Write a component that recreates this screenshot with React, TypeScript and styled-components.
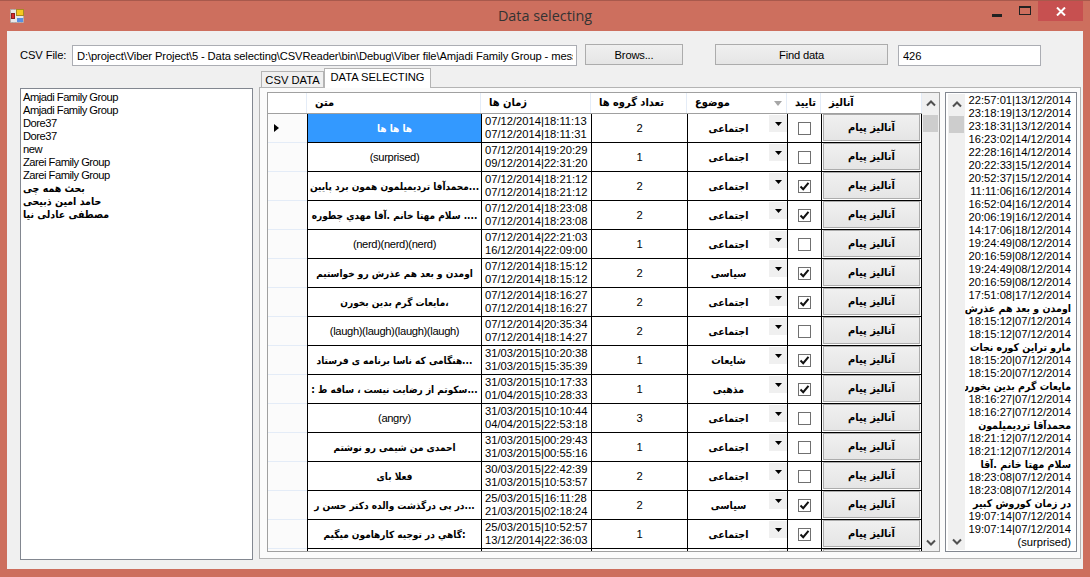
import React from 'react';
import styled, { createGlobalStyle } from 'styled-components';

const GlobalStyle = createGlobalStyle`
  html, body {
    margin: 0;
    padding: 0;
  }
  body {
    font-family: "Liberation Sans", "DejaVu Sans", sans-serif;
    font-size: 11.2px;
    color: #000;
    overflow: hidden;
  }
`;

const PERSIAN_FONT = '"DejaVu Sans Condensed", "DejaVu Sans", sans-serif';

interface IRow {
  text: string;
  rtl?: boolean;
  times: [string, string];
  count: number;
  subject: string;
  checked: boolean;
}

const SOCIAL = 'اجتماعی';
const POLITICAL = 'سیاسی';

const rows: IRow[] = [
  { text: 'ها ها ها', rtl: true, times: ['07/12/2014|18:11:13', '07/12/2014|18:11:31'], count: 2, subject: SOCIAL, checked: false },
  { text: '(surprised)', times: ['07/12/2014|19:20:29', '09/12/2014|22:31:20'], count: 1, subject: SOCIAL, checked: false },
  { text: '...محمدآقا ترديميلمون همون برد پايين', rtl: true, times: ['07/12/2014|18:21:12', '07/12/2014|18:21:12'], count: 2, subject: SOCIAL, checked: true },
  { text: '.... سلام مهتا خانم .آقا مهدي چطوره', rtl: true, times: ['07/12/2014|18:23:08', '07/12/2014|18:23:08'], count: 2, subject: SOCIAL, checked: true },
  { text: '(nerd)(nerd)(nerd)', times: ['07/12/2014|22:21:03', '16/12/2014|22:09:00'], count: 1, subject: SOCIAL, checked: false },
  { text: 'اومدن و بعد هم عذرش رو خواستیم', rtl: true, times: ['07/12/2014|18:15:12', '07/12/2014|18:15:12'], count: 2, subject: POLITICAL, checked: true },
  { text: '،مایعات گرم بدین بخورن', rtl: true, times: ['07/12/2014|18:16:27', '07/12/2014|18:16:27'], count: 2, subject: SOCIAL, checked: true },
  { text: '(laugh)(laugh)(laugh)(laugh)', times: ['07/12/2014|20:35:34', '07/12/2014|18:14:27'], count: 2, subject: SOCIAL, checked: false },
  { text: '...هنگامی که ناسا برنامه ی فرستاد', rtl: true, times: ['31/03/2015|10:20:38', '31/03/2015|15:35:39'], count: 1, subject: 'شایعات', checked: true },
  { text: '...سکوتم از رضایت نیست ، ساقه ط :', rtl: true, times: ['31/03/2015|10:17:33', '01/04/2015|10:28:33'], count: 1, subject: 'مذهبی', checked: true },
  { text: '(angry)', times: ['31/03/2015|10:10:44', '04/04/2015|22:53:18'], count: 3, subject: SOCIAL, checked: false },
  { text: 'احمدی من شیمی رو نوشتم', rtl: true, times: ['31/03/2015|00:29:43', '31/03/2015|00:55:16'], count: 1, subject: SOCIAL, checked: false },
  { text: 'فعلا بای', rtl: true, times: ['30/03/2015|22:42:39', '31/03/2015|10:53:57'], count: 2, subject: SOCIAL, checked: false },
  { text: '...در پی درگذشت والده دکتر حسن ر', rtl: true, times: ['25/03/2015|16:11:28', '21/03/2015|02:18:24'], count: 2, subject: POLITICAL, checked: true },
  { text: ':گاهي در توجيه کارهامون ميگيم', rtl: true, times: ['25/03/2015|10:52:57', '13/12/2014|22:36:03'], count: 1, subject: SOCIAL, checked: true },
];

const names = [
  'Amjadi Family Group',
  'Amjadi Family Group',
  'Dore37',
  'Dore37',
  'new',
  'Zarei Family Group',
  'Zarei Family Group',
];

const persianNames = ['بحث همه چی', 'حامد امین ذبیحی', 'مصطفی عادلی نیا'];

const timeList = [
  '22:57:01|13/12/2014', '23:18:19|13/12/2014', '23:18:31|13/12/2014', '16:23:02|14/12/2014',
  '22:28:16|14/12/2014', '20:22:33|15/12/2014', '20:52:37|15/12/2014', '11:11:06|16/12/2014',
  '16:52:04|16/12/2014', '20:06:19|16/12/2014', '14:17:06|18/12/2014', '19:24:49|08/12/2014',
  '20:16:59|08/12/2014', '19:24:49|08/12/2014', '20:16:59|08/12/2014', '17:51:08|17/12/2014',
  'اومدن و بعد هم عذرش',
  '18:15:12|07/12/2014', '18:15:12|07/12/2014',
  'مارو تراین کوره نجات',
  '18:15:20|07/12/2014', '18:15:20|07/12/2014',
  'مایعات گرم بدین بخورن',
  '18:16:27|07/12/2014', '18:16:27|07/12/2014',
  'محمدآقا ترديميلمون',
  '18:21:12|07/12/2014', '18:21:12|07/12/2014',
  'سلام مهتا خانم .آقا',
  '18:23:08|07/12/2014', '18:23:08|07/12/2014',
  'در زمان کوروش کبیر',
  '19:07:14|07/12/2014', '19:07:14|07/12/2014',
  '(surprised)',
];

const isPersian = (s: string) => /[\u0600-\u06ff]/.test(s);

const ChevronUp = () => (
  <svg width="10" height="7" viewBox="0 0 10 7">
    <path d="M1 5.5 L5 1.5 L9 5.5" fill="none" stroke="#505050" strokeWidth="2" />
  </svg>
);

const ChevronDown = () => (
  <svg width="10" height="7" viewBox="0 0 10 7">
    <path d="M1 1.5 L5 5.5 L9 1.5" fill="none" stroke="#505050" strokeWidth="2" />
  </svg>
);

const FormIcon = () => (
  <svg width="14" height="14" viewBox="0 0 14 14">
    <rect x="0.5" y="0.5" width="13" height="13" fill="#e8e8e8" stroke="#a8a8a8" strokeDasharray="2 1" />
    <rect x="6.5" y="0.5" width="7" height="6" fill="#f6c81e" stroke="#a88a20" strokeWidth="1" />
    <rect x="1.5" y="4.5" width="3" height="5" fill="#d8282c" stroke="#8c2020" strokeWidth="1" />
    <rect x="7" y="9" width="6" height="4" fill="#5a8ee0" />
  </svg>
);

const DropArrow = () => (
  <svg width="7" height="4" viewBox="0 0 7 4">
    <path d="M0 0 H7 L3.5 4 Z" fill="#000" />
  </svg>
);

const CheckMark = () => (
  <svg width="11" height="11" viewBox="0 0 11 11">
    <path d="M1.5 5.5 L4.2 8.2 L9.5 1.8" fill="none" stroke="#111" strokeWidth="2" />
  </svg>
);

function Scroller() {
  return (
    <ScrollBar>
      <ScrollArrow><ChevronUp /></ScrollArrow>
      <ScrollThumb />
      <ScrollTrack />
      <ScrollArrow><ChevronDown /></ScrollArrow>
    </ScrollBar>
  );
}

export default function App() {
  return (
    <Window>
      <GlobalStyle />
      <TitleBar>
        <TitleIcon><FormIcon /></TitleIcon>
        <Title>Data selecting</Title>
        <WindowControls>
          <MinButton><MinGlyph /></MinButton>
          <MaxButton><MaxGlyph /></MaxButton>
          <CloseButton>
            <svg width="10" height="9" viewBox="0 0 10 9">
              <path d="M1 0.5 L9 8.5 M9 0.5 L1 8.5" stroke="#fff" strokeWidth="2" />
            </svg>
          </CloseButton>
        </WindowControls>
      </TitleBar>

      <Client>
        <TopRow>
          <FileLabel>CSV File:</FileLabel>
          <PathInput readOnly value="D:\project\Viber Project\5 - Data selecting\CSVReader\bin\Debug\Viber file\Amjadi Family Group - messages.csv" />
          <BrowsButton>Brows...</BrowsButton>
          <FindButton>Find data</FindButton>
          <CountInput readOnly value="426" />
        </TopRow>

        <Body>
          <NameList>
            {names.map((name, i) => <NameItem key={i}>{name}</NameItem>)}
            {persianNames.map((name, i) => <PersianName key={i} dir="rtl">{name}</PersianName>)}
          </NameList>

          <TabArea>
            <TabBar>
              <Tab>CSV DATA</Tab>
              <Tab $active>DATA SELECTING</Tab>
            </TabBar>
            <TabPanel>
              <GridBox>
                <GridTable>
                  <HeaderRow>
                    <HeaderCell />
                    <HeaderCell>متن</HeaderCell>
                    <HeaderCell>زمان ها</HeaderCell>
                    <HeaderCell>تعداد گروه ها</HeaderCell>
                    <HeaderCell>
                      موضوع
                      <SortArrow />
                    </HeaderCell>
                    <HeaderCell>تایید</HeaderCell>
                    <HeaderCell>آنالیز</HeaderCell>
                  </HeaderRow>
                  {rows.map((row, i) => (
                    <DataRow key={i}>
                      <RowHead>{i === 0 && <RowMarker />}</RowHead>
                      <TextCell $fa={row.rtl} $selected={i === 0} dir={row.rtl ? 'rtl' : 'ltr'}>
                        {row.text}
                      </TextCell>
                      <TimeCell>
                        <span>{row.times[0]}</span>
                        <span>{row.times[1]}</span>
                      </TimeCell>
                      <CountCell>{row.count}</CountCell>
                      <SubjectCell>
                        <SubjectText dir="rtl">{row.subject}</SubjectText>
                        <ComboButton><DropArrow /></ComboButton>
                      </SubjectCell>
                      <CheckCell>
                        <CheckBox>{row.checked && <CheckMark />}</CheckBox>
                      </CheckCell>
                      <ActionCell>
                        <ActionButton>آنالیز پیام</ActionButton>
                      </ActionCell>
                    </DataRow>
                  ))}
                  {/* next row only just shows under the last one */}
                  <DataRow>
                    <RowHead />
                    <GridCell />
                    <GridCell />
                    <GridCell />
                    <SubjectCell>
                      <span />
                      <ComboButton />
                    </SubjectCell>
                    <GridCell />
                    <ActionCell>
                      <ActionButton />
                    </ActionCell>
                  </DataRow>
                </GridTable>
                <Scroller />
              </GridBox>

              <TimeList>
                <Scroller />
                <TimeLines>
                  {timeList.map((line, i) => (
                    <TimeLine key={i} $fa={isPersian(line)} dir={isPersian(line) ? 'rtl' : 'ltr'}>
                      {line}
                    </TimeLine>
                  ))}
                </TimeLines>
              </TimeList>
            </TabPanel>
          </TabArea>
        </Body>
      </Client>
    </Window>
  );
}

const Window = styled.div`
  width: 1090px;
  height: 577px;
  box-sizing: border-box;
  background: #cd6f5e;
  border-top: 1px solid #a8594c;
  padding: 0 7px 8px 7px;
  display: flex;
  flex-direction: column;
`;

const TitleBar = styled.div`
  height: 30px;
  flex: none;
  display: grid;
  grid-template-columns: 1fr auto 1fr;
  align-items: start;
`;

const TitleIcon = styled.div`
  padding: 8px 0 0 3px;
  line-height: 0;
`;

const Title = styled.div`
  font-family: "Open Sans", sans-serif;
  font-size: 14.4px;
  line-height: 30px;
  color: #333;
`;

const WindowControls = styled.div`
  display: flex;
  justify-content: flex-end;
`;

const MinButton = styled.div`
  width: 24px;
  height: 19px;
  margin-right: 2px;
  display: flex;
  align-items: flex-end;
  justify-content: center;
`;

const MinGlyph = styled.div`
  width: 10px;
  height: 3px;
  margin-bottom: 3px;
  background: #222;
`;

const MaxButton = styled.div`
  width: 27px;
  height: 19px;
  display: flex;
  align-items: center;
  justify-content: center;
`;

const MaxGlyph = styled.div`
  width: 10px;
  height: 6px;
  border: 1px solid #222;
  border-top-width: 2px;
`;

const CloseButton = styled.div`
  width: 45px;
  height: 20px;
  background: #c75050;
  display: flex;
  align-items: center;
  justify-content: center;
`;

const Client = styled.div`
  flex: 1;
  background: #f0f0f0;
  padding: 13px 0 0 13px;
  min-height: 0;
`;

const TopRow = styled.div`
  height: 22px;
  display: flex;
  align-items: stretch;
`;

const FileLabel = styled.label`
  width: 52px;
  line-height: 22px;
  letter-spacing: -0.1px;
`;

const PathInput = styled.input`
  width: 505px;
  height: 21px;
  margin-top: 1px;
  box-sizing: border-box;
  border: 1px solid #abadb3;
  background: #fff;
  padding: 0 3px 0 4px;
  font: inherit;
  letter-spacing: -0.12px;
  color: #000;
  outline: none;
`;

const BrowsButton = styled.button`
  width: 98px;
  height: 21px;
  margin-left: 8px;
  border: 1px solid #acacac;
  background: linear-gradient(#f0f0f0, #e5e5e5);
  padding: 0;
  font: inherit;
  letter-spacing: -0.2px;
  color: #000;
`;

const FindButton = styled(BrowsButton)`
  width: 173px;
  margin-left: 32px;
`;

const CountInput = styled(PathInput)`
  width: 143px;
  margin-left: 10px;
`;

const Body = styled.div`
  display: flex;
  margin-top: 2px;
`;

const NameList = styled.div`
  width: 233px;
  height: 472px;
  box-sizing: border-box;
  margin-top: 20px;
  border: 1px solid #828790;
  background: #fff;
  padding: 2px;
  flex: none;
`;

const NameItem = styled.div`
  height: 13px;
  line-height: 13px;
  letter-spacing: -0.5px;
`;

const PersianName = styled.div`
  height: 13px;
  line-height: 13px;
  width: fit-content;
  font-family: ${PERSIAN_FONT};
  font-weight: 700;
  font-size: 10.5px;
`;

const TabArea = styled.div`
  margin-left: 6px;
  width: 822px;
  flex: none;
`;

const TabBar = styled.div`
  height: 20px;
  margin-bottom: -1px;
  padding-left: 2px;
  display: flex;
  align-items: flex-end;
  position: relative;
  z-index: 1;
`;

const Tab = styled.div<{ $active?: boolean }>`
  box-sizing: border-box;
  width: ${(p) => (p.$active ? '107px' : '63px')};
  height: ${(p) => (p.$active ? '20px' : '17px')};
  line-height: ${(p) => (p.$active ? '17px' : '16px')};
  text-align: center;
  border: 1px solid #b4b4b4;
  border-bottom: ${(p) => (p.$active ? 'none' : '1px solid #b4b4b4')};
  background: ${(p) => (p.$active ? '#fff' : '#f0f0f0')};
`;

const TabPanel = styled.div`
  box-sizing: border-box;
  height: 472px;
  border: 1px solid #b4b4b4;
  background: #fbfbfb;
  padding: 4px 1px 0 7px;
  display: flex;
  align-items: flex-start;
  gap: 5px;
`;

const GridBox = styled.div`
  width: 673px;
  height: 460px;
  box-sizing: border-box;
  border: 1px solid #a0a0a0;
  background: #f0f0f0;
  display: flex;
  flex: none;
`;

const GridTable = styled.div`
  width: 654px;
  flex: none;
  overflow: hidden;
`;

const HeaderRow = styled.div`
  display: grid;
  grid-template-columns: 39px 174px 110px 96px 100px 34px 101px;
  height: 21px;
  box-sizing: border-box;
  border-bottom: 1px solid #a0a0a0;
  background: #fff;
`;

const HeaderCell = styled.div`
  box-sizing: border-box;
  border-right: 1px solid #e4ecf7;
  padding: 0 8px;
  font-family: ${PERSIAN_FONT};
  font-weight: 700;
  font-size: 11px;
  line-height: 20px;
  white-space: nowrap;
  display: flex;
  align-items: center;
  justify-content: space-between;
`;

const SortArrow = styled.span`
  width: 0;
  height: 0;
  margin-right: -4px;
  border-left: 4.5px solid transparent;
  border-right: 4.5px solid transparent;
  border-top: 5px solid #a6a6a6;
`;

const DataRow = styled.div`
  display: grid;
  grid-template-columns: 39px 174px 110px 96px 100px 34px 101px;
  height: 29px;
`;

const RowHead = styled.div`
  background: #fbfbfb;
  border-bottom: 1px solid #e4ecf7;
  display: flex;
  align-items: center;
  padding-left: 6px;
`;

const RowMarker = styled.span`
  width: 0;
  height: 0;
  border-top: 4.5px solid transparent;
  border-bottom: 4.5px solid transparent;
  border-left: 5px solid #000;
`;

const GridCell = styled.div`
  box-sizing: border-box;
  background: #fff;
  border-left: 1px solid #000;
  border-bottom: 1px solid #000;
  min-width: 0;
`;

const TextCell = styled(GridCell)<{ $fa?: boolean; $selected?: boolean }>`
  background: ${(p) => (p.$selected ? '#3399ff' : '#fff')};
  color: ${(p) => (p.$selected ? '#fff' : '#000')};
  font-family: ${(p) => (p.$fa ? PERSIAN_FONT : 'inherit')};
  font-weight: ${(p) => (p.$fa ? 700 : 400)};
  font-size: ${(p) => (p.$fa ? '10px' : 'inherit')};
  letter-spacing: ${(p) => (p.$fa ? 'normal' : '-0.35px')};
  display: flex;
  align-items: center;
  justify-content: center;
  white-space: nowrap;
  overflow: hidden;
  padding: 0 3px;
`;

const TimeCell = styled(GridCell)`
  display: flex;
  flex-direction: column;
  justify-content: center;
  padding-left: 3px;
  line-height: 13px;
  white-space: nowrap;
`;

const CountCell = styled(GridCell)`
  display: flex;
  align-items: center;
  justify-content: center;
`;

const SubjectCell = styled(GridCell)`
  display: grid;
  grid-template-columns: 1fr 18px;
`;

const SubjectText = styled.div`
  display: flex;
  align-items: center;
  justify-content: center;
  font-family: ${PERSIAN_FONT};
  font-weight: 700;
  font-size: 10.5px;
`;

const ComboButton = styled.div`
  height: 17px;
  margin-top: 1px;
  background: #f0f0f0;
  display: flex;
  align-items: center;
  justify-content: center;
`;

const CheckCell = styled(GridCell)`
  display: flex;
  align-items: center;
  justify-content: center;
`;

const CheckBox = styled.div`
  width: 13px;
  height: 13px;
  box-sizing: border-box;
  border: 1px solid #707070;
  background: #fff;
  display: flex;
  align-items: center;
  justify-content: center;
`;

const ActionCell = styled(GridCell)`
  border-right: 1px solid #000;
  padding: 0 1px 1px 1px;
`;

const ActionButton = styled.button`
  width: 100%;
  height: 100%;
  box-sizing: border-box;
  border: 1px solid #acacac;
  background: linear-gradient(#f0f0f0, #e5e5e5);
  padding: 0;
  font-family: ${PERSIAN_FONT};
  font-weight: 700;
  font-size: 11px;
  color: #000;
`;

const ScrollBar = styled.div`
  width: 17px;
  height: 100%;
  flex: none;
  background: #f0f0f0;
  display: flex;
  flex-direction: column;
`;

const ScrollArrow = styled.div`
  height: 17px;
  flex: none;
  display: flex;
  align-items: center;
  justify-content: center;
  margin-top: 2px;
`;

const ScrollThumb = styled.div`
  height: 17px;
  flex: none;
  margin: 3px 1px 0 1px;
  background: #cdcdcd;
`;

const ScrollTrack = styled.div`
  flex: 1;
`;

const TimeList = styled.div`
  width: 132px;
  height: 460px;
  box-sizing: border-box;
  border: 1px solid #828790;
  background: #fff;
  padding: 1px 0 1px 2px;
  display: flex;
  flex: none;
`;

const TimeLines = styled.div`
  flex: 1;
  min-width: 0;
  overflow: hidden;
  padding-right: 5px;
`;

const TimeLine = styled.div<{ $fa?: boolean }>`
  height: 13px;
  line-height: 13px;
  text-align: right;
  white-space: nowrap;
  overflow: hidden;
  font-family: ${(p) => (p.$fa ? PERSIAN_FONT : 'inherit')};
  font-weight: ${(p) => (p.$fa ? 700 : 400)};
  font-size: ${(p) => (p.$fa ? '10.5px' : 'inherit')};
`;
